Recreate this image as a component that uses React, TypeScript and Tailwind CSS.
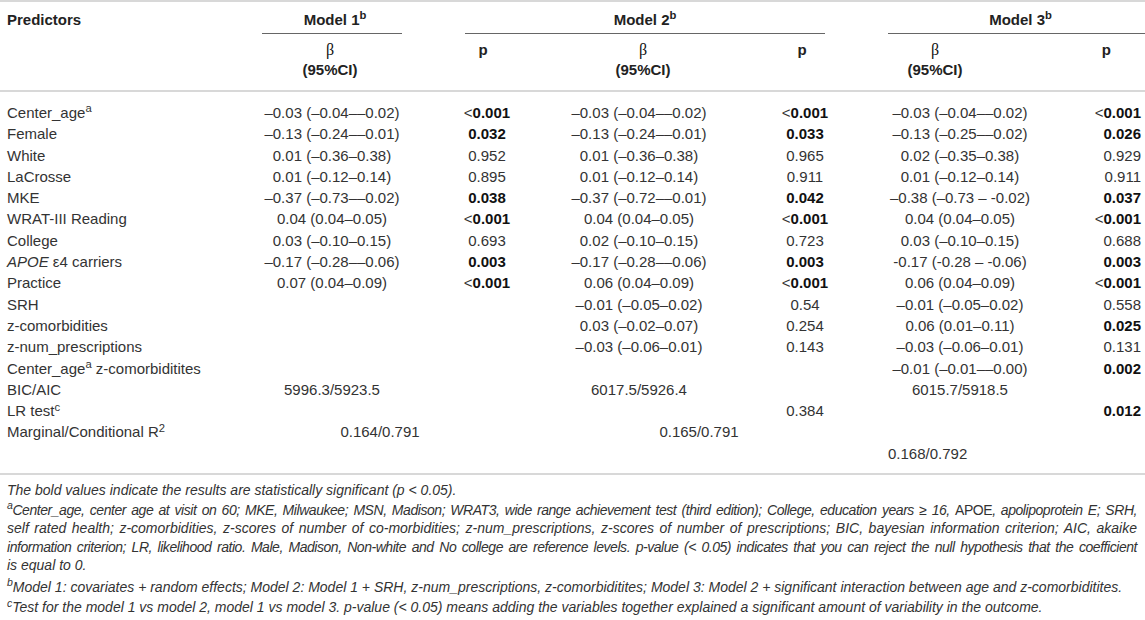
import React from "react";

type RowData = { label: React.ReactNode; cells: string[] };

// "*" marks a bold value, "<*" a bold value after a plain "<"
function Val({ v }: { v: string }) {
    if (v.startsWith("<*")) {
        return (
            <span>
                &lt;<b className="font-bold text-[#111]">{v.slice(2)}</b>
            </span>
        );
    }
    if (v.startsWith("*")) return <b className="font-bold text-[#111]">{v.slice(1)}</b>;
    return <span>{v}</span>;
}

const rows: RowData[] = [
    { label: <>Center_age<sup>a</sup></>, cells: ["–0.03 (–0.04––0.02)", "<*0.001", "–0.03 (–0.04––0.02)", "<*0.001", "–0.03 (–0.04––0.02)", "<*0.001"] },
    { label: "Female", cells: ["–0.13 (–0.24––0.01)", "*0.032", "–0.13 (–0.24––0.01)", "*0.033", "–0.13 (–0.25––0.02)", "*0.026"] },
    { label: "White", cells: ["0.01 (–0.36–0.38)", "0.952", "0.01 (–0.36–0.38)", "0.965", "0.02 (–0.35–0.38)", "0.929"] },
    { label: "LaCrosse", cells: ["0.01 (–0.12–0.14)", "0.895", "0.01 (–0.12–0.14)", "0.911", "0.01 (–0.12–0.14)", "0.911"] },
    { label: "MKE", cells: ["–0.37 (–0.73––0.02)", "*0.038", "–0.37 (–0.72––0.01)", "*0.042", "–0.38 (–0.73 – -0.02)", "*0.037"] },
    { label: "WRAT-III Reading", cells: ["0.04 (0.04–0.05)", "<*0.001", "0.04 (0.04–0.05)", "<*0.001", "0.04 (0.04–0.05)", "<*0.001"] },
    { label: "College", cells: ["0.03 (–0.10–0.15)", "0.693", "0.02 (–0.10–0.15)", "0.723", "0.03 (–0.10–0.15)", "0.688"] },
    { label: <><i>APOE</i> ε4 carriers</>, cells: ["–0.17 (–0.28––0.06)", "*0.003", "–0.17 (–0.28––0.06)", "*0.003", "-0.17 (-0.28 – -0.06)", "*0.003"] },
    { label: "Practice", cells: ["0.07 (0.04–0.09)", "<*0.001", "0.06 (0.04–0.09)", "<*0.001", "0.06 (0.04–0.09)", "<*0.001"] },
    { label: "SRH", cells: ["", "", "–0.01 (–0.05–0.02)", "0.54", "–0.01 (–0.05–0.02)", "0.558"] },
    { label: "z-comorbidities", cells: ["", "", "0.03 (–0.02–0.07)", "0.254", "0.06 (0.01–0.11)", "*0.025"] },
    { label: "z-num_prescriptions", cells: ["", "", "–0.03 (–0.06–0.01)", "0.143", "–0.03 (–0.06–0.01)", "0.131"] },
    { label: <>Center_age<sup>a</sup> z-comorbiditites</>, cells: ["", "", "", "", "–0.01 (–0.01––0.00)", "*0.002"] },
    { label: "BIC/AIC", cells: ["5996.3/5923.5", "", "6017.5/5926.4", "", "6015.7/5918.5", ""] },
    { label: <>LR test<sup>c</sup></>, cells: ["", "", "", "0.384", "", "*0.012"] },
];

function Row({ label, cells }: RowData) {
    return (
        <div className="grid grid-cols-[262px_140px_170px_134px_198px_112px_129px] h-[21.3px] leading-[21.3px]">
            <div className="pl-[7px] whitespace-nowrap">{label}</div>
            {cells.map((c, i) => (
                <div
                    key={i}
                    className={
                        i === 5
                            ? "flex justify-end pr-[4px] whitespace-nowrap"
                            : "flex justify-center whitespace-nowrap"
                    }
                >
                    <Val v={c} />
                </div>
            ))}
        </div>
    );
}

function Line({ children, last, tight }: { children: React.ReactNode; last?: boolean; tight?: boolean }) {
    return (
        <div
            className={
                (last ? "text-left" : "text-justify [text-align-last:justify]") +
                (tight ? " tracking-[-0.45px] [word-spacing:-1px]" : "")
            }
        >
            {children}
        </div>
    );
}

const Beta = () => <div className="font-normal text-[16px] text-[#111] font-['Liberation_Serif',serif]">β</div>;

export default function App() {
    return (
        <div className="w-[1145px] h-[620px] overflow-hidden bg-white text-[#333] font-['Liberation_Sans',Arial,sans-serif]">
            <div className="border-t-2 border-[#d8d8d8] text-[15px]">
                {/* spanner row */}
                <div className="flex pt-[8px] font-bold text-[#222] leading-[20px]">
                    <div className="w-[262px] shrink-0 pl-[7px] pb-[4px]">Predictors</div>
                    <div className="w-[140px] shrink-0 text-center pb-[3px] border-b border-[#666] pl-[6px]">
                        Model 1<sup>b</sup>
                    </div>
                    <div className="w-[63px] shrink-0" />
                    <div className="w-[360px] shrink-0 text-center pb-[3px] border-b border-[#666]">
                        Model 2<sup>b</sup>
                    </div>
                    <div className="w-[63px] shrink-0" />
                    <div className="flex-1 text-center pb-[3px] border-b border-[#666] pl-[8px]">
                        Model 3<sup>b</sup>
                    </div>
                </div>

                {/* sub header */}
                <div className="flex pt-[6px] pb-[10px] leading-[20px] font-bold text-[#222] border-b-2 border-[#d8d8d8]">
                    <div className="w-[262px] shrink-0" />
                    <div className="w-[136px] shrink-0 text-center">
                        <Beta />
                        <div>(95%CI)</div>
                    </div>
                    <div className="w-[170px] shrink-0 text-center">p</div>
                    <div className="w-[150px] shrink-0 text-center">
                        <Beta />
                        <div>(95%CI)</div>
                    </div>
                    <div className="w-[168px] shrink-0 text-center">p</div>
                    <div className="w-[98px] shrink-0 text-center">
                        <Beta />
                        <div>(95%CI)</div>
                    </div>
                    <div className="flex-1 text-right pr-[34px]">p</div>
                </div>

                {/* body */}
                <div className="pt-[10px] pb-[9px] border-b-2 border-[#d8d8d8]">
                    {rows.map((r, i) => (
                        <Row key={i} label={r.label} cells={r.cells} />
                    ))}
                    <div className="flex h-[21.3px] leading-[21.3px] whitespace-nowrap">
                        <div className="w-[262px] shrink-0 pl-[7px]">
                            Marginal/Conditional R<sup>2</sup>
                        </div>
                        <div className="w-[236px] shrink-0 text-center">0.164/0.791</div>
                        <div className="w-[402px] shrink-0 text-center">0.165/0.791</div>
                    </div>
                    <div className="flex h-[21.3px] leading-[21.3px]">
                        <div className="w-[888px] shrink-0" />
                        <div>0.168/0.792</div>
                    </div>
                </div>
            </div>

            {/* footnotes */}
            <div className="pt-[6px] pl-[7px] pr-[8px] text-[14px] italic leading-[18.5px] text-[#333]">
                <p>
                    The bold values indicate the results are statistically significant (p &lt; 0.05).
                </p>
                <div className="mt-[1px]">
                    <Line tight>
                        <sup>a</sup>Center_age, center age at visit on 60; MKE, Milwaukee; MSN, Madison; WRAT3, wide range
                        achievement test (third edition); College, education years ≥ 16, <span className="not-italic">APOE</span>,
                        apolipoprotein E; SRH,
                    </Line>
                    <Line>
                        self rated health; z-comorbidities, z-scores of number of co-morbidities; z-num_prescriptions, z-scores of
                        number of prescriptions; BIC, bayesian information criterion; AIC, akaike
                    </Line>
                    <Line tight>
                        information criterion; LR, likelihood ratio. Male, Madison, Non-white and No college are reference levels.
                        p-value (&lt; 0.05) indicates that you can reject the null hypothesis that the coefficient
                    </Line>
                    <Line last>is equal to 0.</Line>
                </div>
                <p className="mt-[3px] whitespace-nowrap">
                    <sup>b</sup>Model 1: covariates + random effects; Model 2: Model 1 + SRH, z-num_prescriptions,
                    z-comorbiditites; Model 3: Model 2 + significant interaction between age and z-comorbiditites.
                </p>
                <p className="mt-[2px] whitespace-nowrap">
                    <sup>c</sup>Test for the model 1 vs model 2, model 1 vs model 3. p-value (&lt; 0.05) means adding the
                    variables together explained a significant amount of variability in the outcome.
                </p>
            </div>
        </div>
    );
}
